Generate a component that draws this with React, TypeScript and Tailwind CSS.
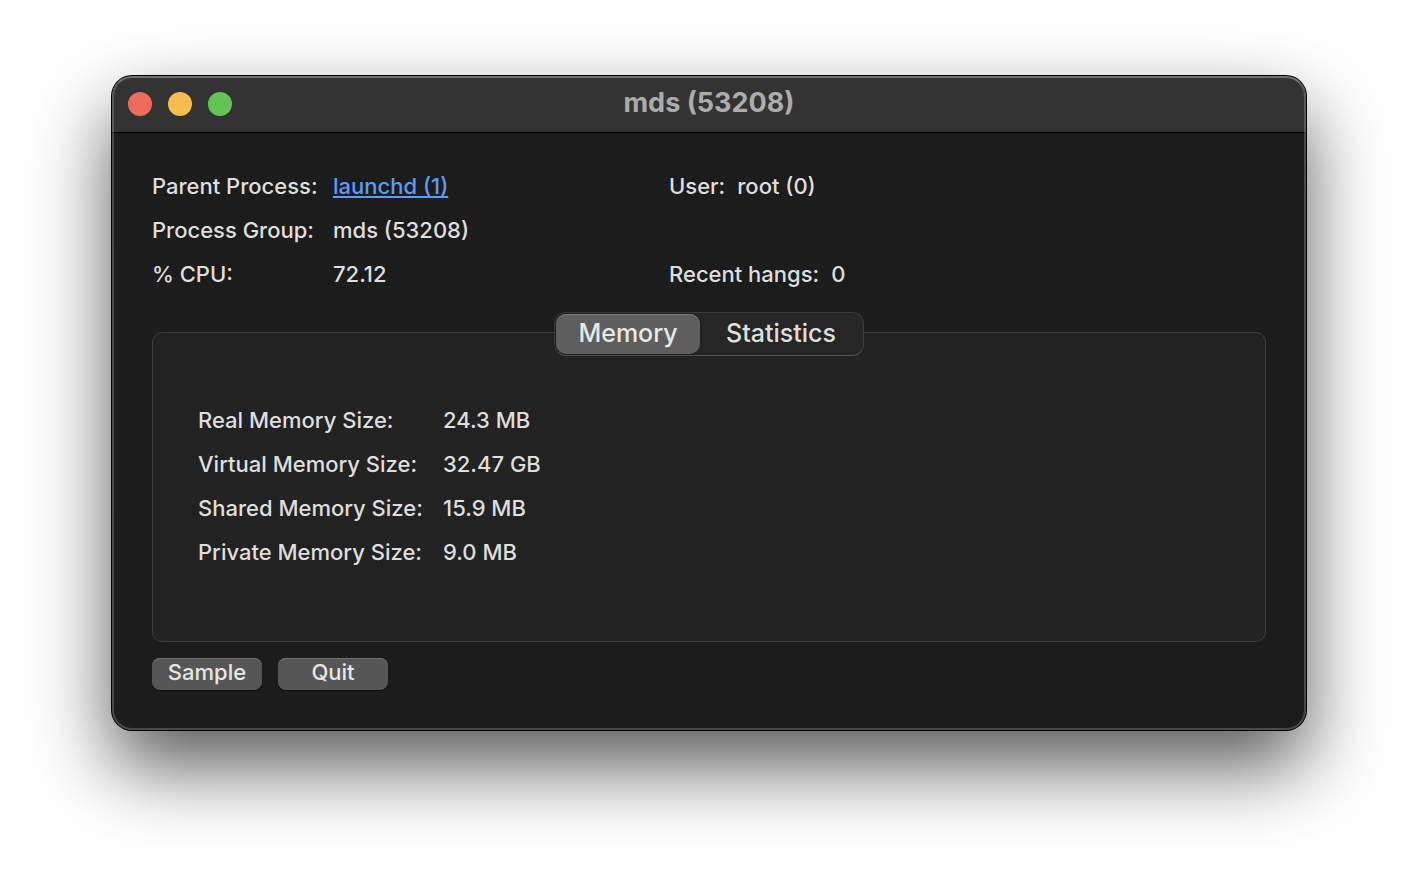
import React, { useState } from 'react';

const tabs = [
  { name: 'Memory', width: 'w-36' },
  { name: 'Statistics', width: 'w-[162px]' },
];

const memoryRows = [
  { label: 'Real Memory Size:', value: '24.3 MB' },
  { label: 'Virtual Memory Size:', value: '32.47 GB' },
  { label: 'Shared Memory Size:', value: '15.9 MB' },
  { label: 'Private Memory Size:', value: '9.0 MB' },
];

const TitleBar: React.FC<{ title: string }> = ({ title }) => (
  <header className="grid h-[57px] grid-cols-[1fr_auto_1fr] items-center rounded-t-[20px] border-b border-black bg-[#333333] px-4">
    <div className="flex gap-4">
      <button aria-label="Close" className="size-6 rounded-full bg-[#ed6a5f]" />
      <button aria-label="Minimize" className="size-6 rounded-full bg-[#f5bd4f]" />
      <button aria-label="Zoom" className="size-6 rounded-full bg-[#61c454]" />
    </div>
    <h1 className="pb-0.5 text-[27px] leading-8 font-bold text-[#acacac]">{title}</h1>
  </header>
);

const PushButton: React.FC<{ children: React.ReactNode }> = ({ children }) => (
  <button className="h-8 w-[110px] rounded-lg bg-[#565656] pb-1 text-[22px] leading-7 text-[#e6e6e6] shadow-[inset_0_1px_0_#717171,0_1px_1px_#0c0c0c]">
    {children}
  </button>
);

const App: React.FC = () => {
  const [activeTab, setActiveTab] = useState('Memory');

  return (
    <main className="min-h-screen bg-white px-28 pt-19 pb-37 font-[Inter,sans-serif]">
      <section className="relative rounded-[20px] bg-[#1c1c1c] text-[22px] leading-7 font-medium text-[#dedede] shadow-[0_0_0_1px_#000000,0_36px_78px_rgba(0,0,0,0.66)]">
        <TitleBar title="mds (53208)" />

        <div className="flex flex-col px-10 pt-[39px] pb-10">
          <dl className="grid grid-cols-[181px_336px_1fr] gap-y-4">
            <dt>Parent Process:</dt>
            <dd>
              <a href="#launchd" className="text-[#5a9df8] underline decoration-2 underline-offset-2">launchd (1)</a>
            </dd>
            <div className="flex gap-3">
              <dt>User:</dt>
              <dd>root (0)</dd>
            </div>
            <dt>Process Group:</dt>
            <dd className="col-span-2">mds (53208)</dd>
            <dt>% CPU:</dt>
            <dd>72.12</dd>
            <div className="flex gap-3">
              <dt>Recent hangs:</dt>
              <dd>0</dd>
            </div>
          </dl>

          <div
            role="tablist"
            className="z-10 mt-6 -mb-6 flex h-11 self-center rounded-xl border border-[#3c3c3c] border-b-[#555555] bg-[#262626] p-px"
          >
            {tabs.map((tab) => (
              <button
                key={tab.name}
                role="tab"
                aria-selected={activeTab === tab.name}
                onClick={() => setActiveTab(tab.name)}
                className={`rounded-[10px] pb-0.5 text-[25px] leading-8 ${tab.width} ${
                  activeTab === tab.name
                    ? 'bg-[#5e5e5e] text-[#e8e8e8] shadow-[inset_0_1px_0_#7a7a7a,0_0_2px_#0c0c0c]'
                    : 'text-[#dedede]'
                }`}
              >
                {tab.name}
              </button>
            ))}
          </div>

          <div role="tabpanel" className="h-[310px] rounded-[10px] border border-[#3e3e3e] bg-[#222222] px-[45px] pt-[73px]">
            {activeTab === 'Memory' && (
              <dl className="grid grid-cols-[245px_1fr] gap-y-4">
                {memoryRows.map((row) => (
                  <React.Fragment key={row.label}>
                    <dt>{row.label}</dt>
                    <dd>{row.value}</dd>
                  </React.Fragment>
                ))}
              </dl>
            )}
          </div>

          <div className="mt-4 flex gap-4">
            <PushButton>Sample</PushButton>
            <PushButton>Quit</PushButton>
          </div>
        </div>

        {/* light rim along the window edge */}
        <div className="pointer-events-none absolute inset-0 rounded-[20px] border-2 border-white/20 border-t-white/30" />
      </section>
    </main>
  );
};

export default App;
